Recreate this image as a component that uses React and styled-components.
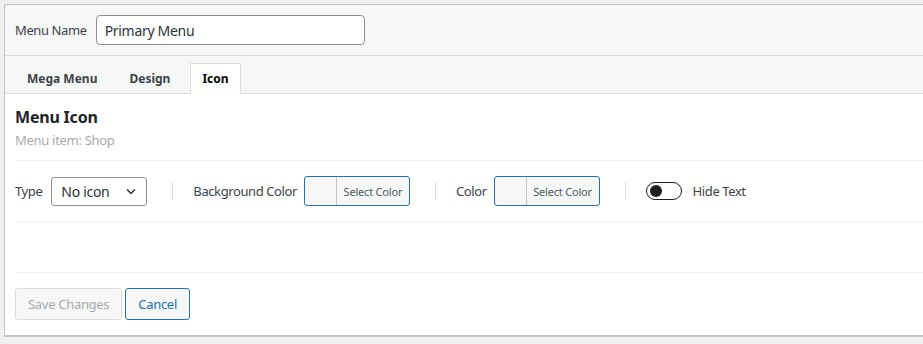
import React, { useState } from 'react';
import styled, { createGlobalStyle } from 'styled-components';

const GlobalStyle = createGlobalStyle`
    body {
        margin: 0;
        background: #f0f0f1;
        font-family: "Noto Sans", "Open Sans", sans-serif;
        color: #1d2327;
        overflow: hidden;
    }
`;

const Modal = styled.div`
    margin: 4px 0 0 4px;
    width: 1000px;
    background: #fff;
    border: 1px solid #c3c4c7;
    border-bottom-width: 2px;
`;

const Header = styled.div`
    display: flex;
    align-items: center;
    gap: 9px;
    height: 50px;
    padding: 0 10px;
    background: #f6f7f7;
    border-bottom: 1px solid #dcdcde;

    label {
        font-size: 13px;
        letter-spacing: -0.4px;
        color: #3c434a;
    }
`;

const NameInput = styled.input`
    box-sizing: border-box;
    width: 269px;
    height: 30px;
    padding: 0 8px;
    border: 1px solid #8c8f94;
    border-radius: 4px;
    font: inherit;
    font-size: 14px;
    letter-spacing: -0.3px;
    color: #2c3338;
    background: #fff;
`;

const Tabs = styled.div`
    display: flex;
    align-items: flex-end;
    gap: 8px;
    height: 37px;
    padding: 0 10px;
    background: #f6f7f7;
    border-bottom: 1px solid #dcdcde;
`;

const Tab = styled.div`
    box-sizing: border-box;
    height: 31px;
    margin-bottom: -1px;
    padding: 0 11px;
    display: flex;
    align-items: center;
    font-size: 12px;
    font-weight: 700;
    color: ${p => (p.$active ? '#000' : '#3c434a')};
    background: ${p => (p.$active ? '#fff' : 'transparent')};
    border: 1px solid ${p => (p.$active ? '#dcdcde' : 'transparent')};
    border-bottom-color: ${p => (p.$active ? '#fff' : 'transparent')};
`;

const Body = styled.div`
    padding: 12px 0 0 10px;
`;

const Title = styled.h2`
    margin: 0;
    font-size: 16px;
    font-weight: 700;
    line-height: 22px;
    letter-spacing: -0.2px;
`;

const Sub = styled.div`
    margin-top: 4px;
    font-size: 13px;
    letter-spacing: -0.3px;
    color: #a7aaad;
    line-height: 16px;
`;

const Row = styled.div`
    display: flex;
    align-items: center;
    height: 60px;
    margin-top: 12px;
    border-top: 1px solid #f0f0f1;
    border-bottom: 1px solid #f0f0f1;
`;

const Field = styled.div`
    display: flex;
    align-items: center;
    gap: ${p => p.$gap || 7}px;
    font-size: 13px;
    letter-spacing: -0.4px;
    color: #3c434a;
`;

const Sep = styled.span`
    width: 1px;
    height: 19px;
    background: #dcdcde;
    margin: 0 20px 0 25px;
`;

const Select = styled.div`
    box-sizing: border-box;
    width: 96px;
    height: 29px;
    display: flex;
    align-items: center;
    justify-content: space-between;
    padding: 0 7px 0 9px;
    border: 1px solid #8c8f94;
    border-radius: 3px;
    font-size: 14px;
    letter-spacing: -0.3px;
    color: #2c3338;
`;

const ColorButton = styled.div`
    box-sizing: border-box;
    display: flex;
    height: 30px;
    width: 106px;
    border: 1px solid #2271b1;
    border-radius: 3px;
    background: #f6f7f7;
    overflow: hidden;
`;

const Swatch = styled.span`
    width: 31px;
    border-right: 1px solid #c3c4c7;
`;

const ColorText = styled.span`
    flex: 1;
    display: flex;
    align-items: center;
    justify-content: center;
    font-size: 11px;
    letter-spacing: -0.2px;
    color: #50575e;
`;

const Toggle = styled.button`
    box-sizing: border-box;
    width: 36px;
    height: 18px;
    padding: 0 3px;
    display: flex;
    align-items: center;
    border: 1px solid #1e1e1e;
    border-radius: 9px;
    background: #fff;
    cursor: pointer;

    &::before {
        content: '';
        width: 12px;
        height: 12px;
        border-radius: 50%;
        background: #1e1e1e;
        margin-left: ${p => (p.$on ? '16px' : '0')};
    }
`;

const Spacer = styled.div`
    height: 50px;
    border-bottom: 1px solid #f0f0f1;
`;

const Footer = styled.div`
    display: flex;
    gap: 3px;
    padding: 15px 10px 15px;
`;

const Button = styled.button`
    box-sizing: border-box;
    height: 32px;
    padding: 0 12px;
    font: inherit;
    font-size: 13px;
    letter-spacing: -0.3px;
    border-radius: 3px;
    background: #f6f7f7;
    border: 1px solid ${p => (p.$primary ? '#2271b1' : '#dcdcde')};
    color: ${p => (p.$primary ? '#2271b1' : '#a7aaad')};
`;

const Chevron = () => (
    <svg width="16" height="16" viewBox="0 0 20 20" fill="none" stroke="#2c3338" strokeWidth="1.8">
        <path d="M5 8l5 5 5-5" />
    </svg>
);

const App = () => {
    const [hide, setHide] = useState(false);

    return (
        <>
            <GlobalStyle />
            <Modal>
                <Header>
                    <label>Menu Name</label>
                    <NameInput defaultValue="Primary Menu" />
                </Header>
                <Tabs>
                    <Tab>Mega Menu</Tab>
                    <Tab>Design</Tab>
                    <Tab $active>Icon</Tab>
                </Tabs>
                <Body>
                    <Title>Menu Icon</Title>
                    <Sub>Menu item: Shop</Sub>
                    <Row>
                        <Field $gap={9}>
                            Type
                            <Select>No icon <Chevron /></Select>
                        </Field>
                        <Sep />
                        <Field>
                            Background Color
                            <ColorButton>
                                <Swatch />
                                <ColorText>Select Color</ColorText>
                            </ColorButton>
                        </Field>
                        <Sep />
                        <Field>
                            Color
                            <ColorButton>
                                <Swatch />
                                <ColorText>Select Color</ColorText>
                            </ColorButton>
                        </Field>
                        <Sep />
                        <Field $gap={11}>
                            <Toggle $on={hide} onClick={() => setHide(!hide)} />
                            Hide Text
                        </Field>
                    </Row>
                    <Spacer />
                </Body>
                <Footer>
                    <Button disabled>Save Changes</Button>
                    <Button $primary>Cancel</Button>
                </Footer>
            </Modal>
        </>
    );
};

export default App;
